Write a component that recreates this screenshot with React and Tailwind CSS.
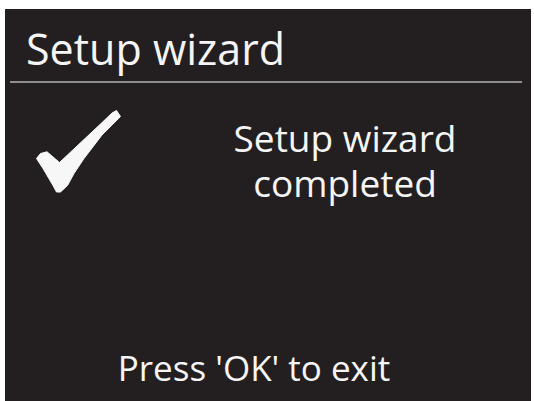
export default function App() {
  const font = { fontFamily: '"Open Sans", "Noto Sans", sans-serif' };
  return (
    <div className="w-[534px] h-[401px] bg-white pl-[5px] pt-[9px] overflow-hidden" style={font}>
      <div className="w-[526px] h-[392px] bg-[#231f20] flex flex-col text-[#f5f5f5] font-medium">
        <div className="pl-[21px] pt-[18px] text-[43px] leading-[43px]">Setup wizard</div>
        <div className="ml-[5px] mr-[9px] mt-[11px] h-[2px] bg-[#8e8e8e]" />
        <div className="flex items-start pt-[22px]">
          <svg className="ml-[30px] shrink-0" width="90" height="90" viewBox="35 105 90 90">
            <path
              d="M36.5 158.5 L40.5 153.5 L47 151.8 L59.5 162.5 L100 124.5 L112 113 L116.5 110.5 L120.5 116.5 L102 135 L84 158.5 L74 173.5 L67.5 185.5 L60.5 192 L56.5 192 L53 185.5 L43 168.5 Z"
              fill="#f7f7f7"
              stroke="#f7f7f7"
              strokeWidth="1"
              strokeLinejoin="round"
            />
          </svg>
          <div className="ml-[98px] mt-[10px] w-[244px] text-center text-[37px] leading-[45px]">
            <div>Setup wizard</div>
            <div>completed</div>
          </div>
        </div>
        <div className="mt-auto pb-[16px] pr-[28px] text-center text-[35px] leading-[35px]">Press 'OK' to exit</div>
      </div>
    </div>
  );
}
